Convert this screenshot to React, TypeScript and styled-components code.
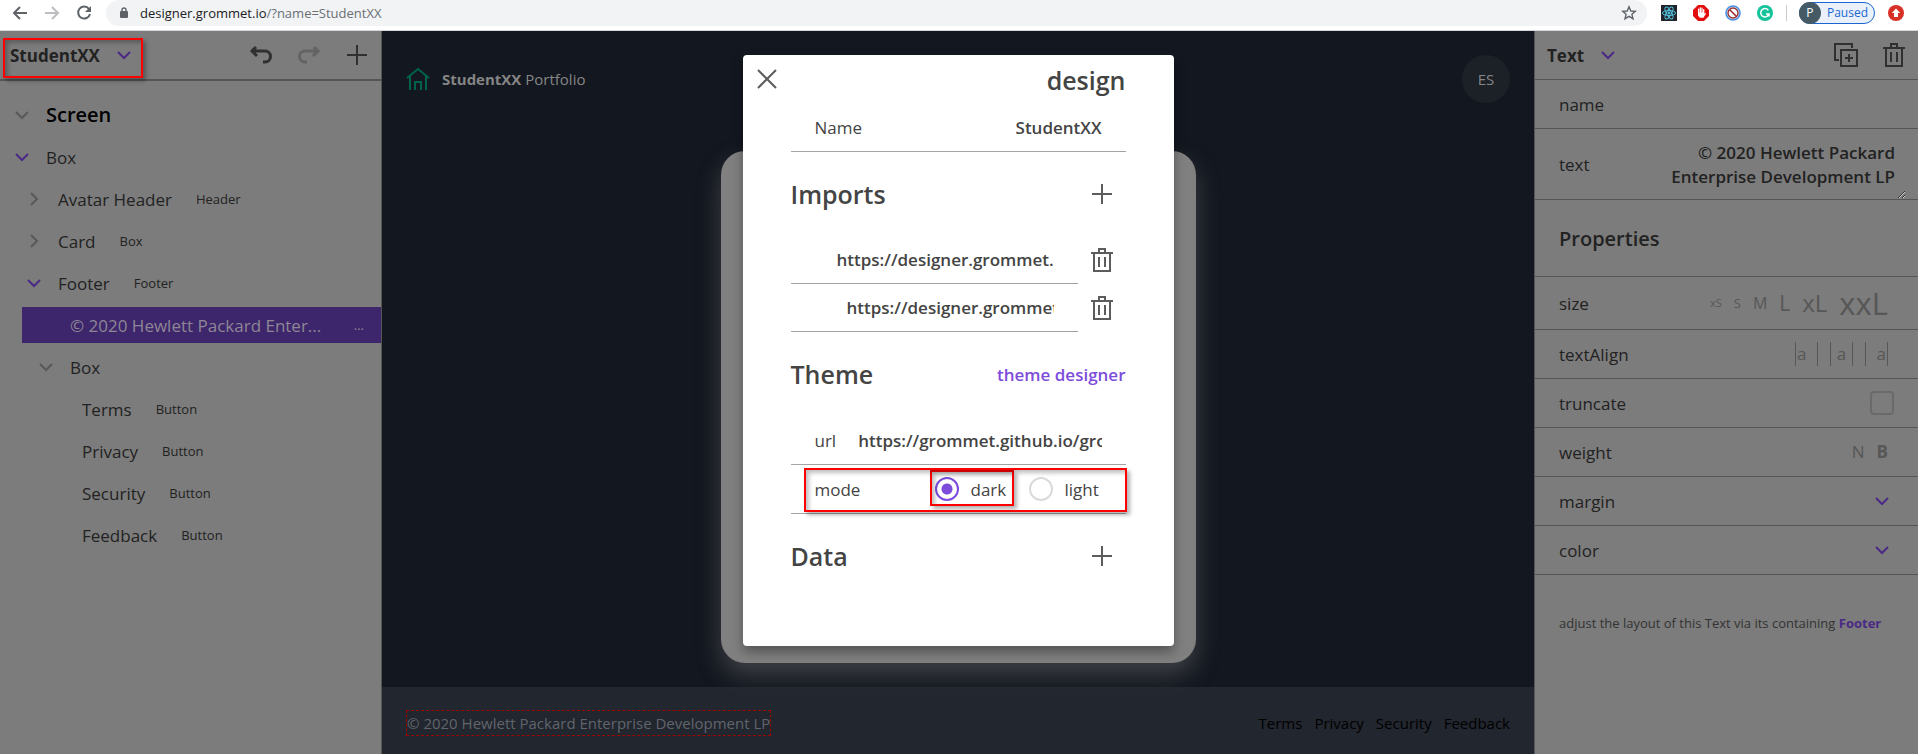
import React from "react";
import styled, { createGlobalStyle, css } from "styled-components";

const color = {
  panel: "#7c7c7c",
  line: "#555555",
  ink: "#222222",
  muted: "#444444",
  faint: "#575757",
  accent: "#4b2a86",
  brand: "#7d4cdb",
  canvas: "#13171f",
  footer: "#22262e",
};

const GlobalStyle = createGlobalStyle`
  *, *::before, *::after { box-sizing: border-box; }
  body { margin: 0; background: ${color.panel}; }
  body, button, input, textarea { font-family: "Open Sans", "Noto Sans", sans-serif; }
  button { border: 0; padding: 0; background: none; color: inherit; font-size: inherit; cursor: pointer; }
  h1, h2 { margin: 0; }
`;

/* ---------- icons ---------- */

type IconProps = { d: string; size?: number; width?: number; tint?: string; box?: number };
const Icon = ({ d, size = 24, width = 2, tint = "currentColor", box = 24 }: IconProps) => (
  <svg width={size} height={size} viewBox={`0 0 ${box} ${box}`} fill="none" stroke={tint} strokeWidth={width} aria-hidden="true">
    <path d={d} />
  </svg>
);

const shapes = {
  down: "M18 9 12 15 6 9",
  right: "M9 6 15 12 9 18",
  add: "M12 22V2M2 12H22",
  close: "M3 3 21 21M3 21 21 3",
  trash: "M4 5H20V23H4ZM1 5H23M9 1H15V5H9ZM9 9V19M15 9V19",
  duplicate: "M7 7H23V23H7ZM5 17H1V1H18V5M15 11V19M11 15H19",
  undo: "M7 4 3 8 8 13M3 8H16A5 5 0 0 1 16 19H14",
  redo: "M17 4 21 8 16 13M21 8H8A5 5 0 0 0 8 19H10",
  home: "M1 11 12 2 23 11M4 9V23M20 9V23M9 23V15H15V23",
  back: "M8 2 2 8 8 14M2 8H15",
  forward: "M8 2 14 8 8 14M14 8H1",
};

const Reload = () => (
  <svg width="16" height="16" viewBox="0 0 16 16" aria-hidden="true">
    <path d="M13 4A6 6 0 1 0 14 9" fill="none" stroke="#5f6368" strokeWidth="2" />
    <path d="M15 1V7H9Z" fill="#5f6368" />
  </svg>
);
const Lock = () => (
  <svg width="10" height="12" viewBox="0 0 10 12" aria-hidden="true">
    <rect x="1" y="4" width="8" height="7" rx="1" fill="#5f6368" />
    <path d="M3 5V3A2 2 0 0 1 7 3V5" fill="none" stroke="#5f6368" strokeWidth="1.4" />
  </svg>
);
const Star = () => (
  <svg width="16" height="16" viewBox="0 0 16 16" aria-hidden="true">
    <path d="M8 1.8 9.8 6 14.3 6.3 10.9 9.3 12 13.7 8 11.3 4 13.7 5.1 9.3 1.7 6.3 6.2 6Z" fill="none" stroke="#5f6368" strokeWidth="1.4" />
  </svg>
);
const ReactMark = () => (
  <svg width="16" height="16" viewBox="0 0 16 16" aria-hidden="true">
    <rect width="16" height="16" fill="#20232a" />
    <g fill="none" stroke="#53c1de" strokeWidth="1">
      <ellipse cx="8" cy="8" rx="6.6" ry="2.5" />
      <ellipse cx="8" cy="8" rx="6.6" ry="2.5" transform="rotate(60 8 8)" />
      <ellipse cx="8" cy="8" rx="6.6" ry="2.5" transform="rotate(120 8 8)" />
    </g>
    <circle cx="8" cy="8" r="1.4" fill="#53c1de" />
  </svg>
);
const HandMark = () => (
  <svg width="16" height="16" viewBox="0 0 16 16" aria-hidden="true">
    <path d="M5 0H11L16 5V11L11 16H5L0 11V5Z" fill="#e40d0d" />
    <path d="M5.6 8V4.2M7.3 7.5V3M9 7.5V3.2M10.7 8V4.6" stroke="#fff" strokeWidth="1.3" strokeLinecap="round" />
    <path d="M5 7.5H11.3V9L12.3 7.8 13 8.6 10.5 12.8H6.8L5 10.6Z" fill="#fff" />
  </svg>
);
const BlockMark = () => (
  <svg width="16" height="16" viewBox="0 0 16 16" aria-hidden="true">
    <circle cx="8" cy="8" r="7" fill="#dcebfa" stroke="#4a90e2" strokeWidth="1.6" />
    <circle cx="8" cy="8" r="5" fill="#fff" stroke="#a03030" strokeWidth="1.4" />
    <path d="M4.5 4.5 11.5 11.5" stroke="#a03030" strokeWidth="1.6" />
  </svg>
);
const GreenMark = () => (
  <svg width="16" height="16" viewBox="0 0 16 16" aria-hidden="true">
    <circle cx="8" cy="8" r="8" fill="#15c39a" />
    <path d="M11.3 5.2A4.2 4.2 0 1 0 12 9H9M12 9V11.6" fill="none" stroke="#fff" strokeWidth="1.5" />
  </svg>
);
const UpdateMark = () => (
  <svg width="16" height="16" viewBox="0 0 16 16" aria-hidden="true">
    <circle cx="8" cy="8" r="8" fill="#d93025" />
    <path d="M8 3.6 12.2 8H10V12H6V8H3.8Z" fill="#fff" />
  </svg>
);

/* ---------- browser bar ---------- */

const BrowserBar = styled.header`
  display: flex;
  align-items: flex-start;
  height: 31px;
  padding-left: 12px;
  padding-right: 14px;
  background: #fff;
  border-bottom: 1px solid #d5d7da;
`;
const NavButtons = styled.div`
  display: flex;
  align-items: center;
  gap: 16px;
  height: 25px;
  color: #5f6368;
`;
const BarButton = styled.button`
  display: flex;
  flex: none;
`;
const Address = styled.div`
  display: flex;
  flex: 1;
  align-items: center;
  height: 26px;
  margin: 0 14px;
  padding: 0 10px 0 13px;
  border-radius: 13px;
  background: #f1f3f4;
`;
const Url = styled.span`
  flex: 1;
  margin-left: 11px;
  color: #202124;
  font-size: 13px;
  line-height: 24px;
`;
const UrlPath = styled.span`
  color: #6b6f74;
`;
const Divider = styled.span`
  width: 1px;
  height: 16px;
  margin: 0 -4px 0 -3px;
  background: #c8cacd;
`;
const Profile = styled.button`
  display: flex;
  align-items: center;
  gap: 6px;
  height: 22px;
  margin-right: -3px;
  padding-right: 6px;
  border: 1px solid #1a67d2;
  border-radius: 11px;
  background: #eaf1fb;
  color: #1a67d2;
  font-size: 12px;
`;
const ProfileInitial = styled.span`
  width: 22px;
  height: 22px;
  margin-left: -1px;
  border-radius: 50%;
  background: #455a64;
  color: #fff;
  line-height: 22px;
`;

/* ---------- workspace ---------- */

const Page = styled.div`
  display: flex;
  flex-direction: column;
  min-height: 100vh;
`;
const Workspace = styled.div`
  display: grid;
  flex: 1;
  grid-template-columns: minmax(280px, 382px) minmax(480px, 1fr) minmax(300px, 384px);
`;
const Sidebar = styled.nav`
  border-right: 1px solid ${color.line};
  background: ${color.panel};
  color: ${color.ink};
`;
const PanelHeader = styled.div<{ $line: number }>`
  display: flex;
  align-items: center;
  justify-content: space-between;
  height: ${(p) => 48 + p.$line}px;
  border-bottom: ${(p) => p.$line}px solid ${color.line};
`;
const MenuButton = styled.button<{ $start: number }>`
  position: relative;
  display: flex;
  align-items: center;
  gap: 12px;
  height: 48px;
  padding: 0 7px 0 ${(p) => p.$start}px;
  font-size: 17px;
  font-weight: 700;
`;
const Actions = styled.div`
  display: flex;
  color: #303030;
`;
const IconButton = styled.button<{ $dim?: boolean }>`
  display: flex;
  flex: none;
  align-items: center;
  justify-content: center;
  width: 48px;
  height: 48px;
  ${(p) => p.$dim && css`color: #636363;`}
`;
const Highlight = styled.span<{ $inset: string }>`
  position: absolute;
  inset: ${(p) => p.$inset};
  border: 2px solid #ff0000;
  box-shadow: 3px 3px 4px rgba(0, 0, 0, 0.3), inset 3px 3px 4px rgba(0, 0, 0, 0.25);
  pointer-events: none;
`;

const Tree = styled.ul`
  margin: 0;
  padding: 12px 0 0;
  list-style: none;
`;
const TreeItem = styled.li<{ $indent: number }>`
  padding: 3px 0 3px ${(p) => p.$indent}px;
`;
const TreeButton = styled.button<{ $selected?: boolean; $title?: boolean }>`
  display: flex;
  align-items: center;
  width: 100%;
  height: ${(p) => (p.$title ? 37 : 36)}px;
  padding-left: ${(p) => (p.$selected ? 12 : 10)}px;
  padding-right: 17px;
  color: ${(p) => (p.$selected ? "#8e8696" : p.$title ? "#000" : color.ink)};
  background: ${(p) => (p.$selected ? "#3d266b" : "transparent")};
  font-size: ${(p) => (p.$title ? 20 : 17)}px;
  font-weight: ${(p) => (p.$title ? 600 : 400)};
`;
const Toggle = styled.span<{ $open?: boolean }>`
  display: flex;
  width: 24px;
  margin-right: 12px;
  color: ${(p) => (p.$open ? color.accent : "#595959")};
`;
const Kind = styled.span<{ $end?: boolean }>`
  margin-left: ${(p) => (p.$end ? "auto" : "24px")};
  font-size: 13px;
`;

type Node = { label: string; kind?: string; level: number; icon?: "down" | "right"; open?: boolean; selected?: boolean; title?: boolean };
const nodes: Node[] = [
  { label: "Screen", level: 0, icon: "down", title: true },
  { label: "Box", level: 0, icon: "down", open: true },
  { label: "Avatar Header", kind: "Header", level: 1, icon: "right" },
  { label: "Card", kind: "Box", level: 1, icon: "right" },
  { label: "Footer", kind: "Footer", level: 1, icon: "down", open: true },
  { label: "© 2020 Hewlett Packard Enter...", kind: "...", level: 2, selected: true },
  { label: "Box", level: 2, icon: "down" },
  { label: "Terms", kind: "Button", level: 3 },
  { label: "Privacy", kind: "Button", level: 3 },
  { label: "Security", kind: "Button", level: 3 },
  { label: "Feedback", kind: "Button", level: 3 },
];

/* ---------- canvas ---------- */

const Canvas = styled.main`
  position: relative;
  display: flex;
  flex-direction: column;
  background: ${color.canvas};
  color: #858585;
  font-size: 15px;
`;
const SiteHeader = styled.div`
  display: flex;
  align-items: center;
  justify-content: space-between;
  height: 96px;
  padding: 0 24px;
`;
const Brand = styled.div`
  display: flex;
  align-items: center;
  gap: 12px;
`;
const Avatar = styled.div`
  width: 48px;
  height: 48px;
  border-radius: 50%;
  background: #1c2027;
  line-height: 48px;
  text-align: center;
`;
const Stage = styled.div`
  display: flex;
  flex: 1;
  justify-content: center;
  padding: 24px;
`;
const StageCard = styled.div`
  width: 475px;
  border-radius: 24px;
  background: #808080;
  box-shadow: 0 12px 24px rgba(128, 128, 128, 0.4);
`;
const SiteFooter = styled.footer`
  display: flex;
  align-items: center;
  justify-content: space-between;
  padding: 23px 24px 18px;
  background: rgba(40, 44, 52, 0.75);
`;
const Copyright = styled.span`
  border: 1px dashed #a00000;
  color: #60656c;
  line-height: 24px;
`;
const FooterLinks = styled.div`
  display: flex;
  gap: 12px;
`;
const FooterLink = styled.a`
  color: #000;
  text-decoration: none;
`;

/* ---------- dialog ---------- */

const DialogLayer = styled.div`
  position: absolute;
  inset: 0;
  display: flex;
  align-items: flex-start;
  justify-content: center;
  padding-top: 24px;
`;
const Dialog = styled.section`
  width: 431px;
  padding-bottom: 48px;
  border-radius: 4px;
  background: #fff;
  color: ${color.muted};
  font-size: 17px;
  box-shadow: 0 6px 12px rgba(0, 0, 0, 0.35);
`;
const DialogHeader = styled.div`
  display: flex;
  align-items: center;
  justify-content: space-between;
  height: 48px;
  padding-right: 48px;
  color: #5c5c5c;
`;
const DialogTitle = styled.h1`
  padding-top: 2px;
  color: ${color.muted};
  font-size: 25px;
  font-weight: 600;
  line-height: 32px;
`;
const DialogBody = styled.div`
  padding: 0 48px;
`;
const Field = styled.div`
  position: relative;
  display: flex;
  flex: 1;
  align-items: center;
  justify-content: space-between;
  gap: 22px;
  min-width: 0;
  height: 49px;
  padding: 0 24px;
  border-bottom: 1px solid #a3a3a3;
`;
const ImportRow = styled.div`
  display: flex;
  height: 48px;
  color: #5c5c5c;
  ${Field} { height: 48px; }
`;
const TextInput = styled.input<{ $width?: number; $end?: boolean }>`
  flex: ${(p) => (p.$width ? "none" : "1")};
  width: ${(p) => (p.$width ? `${p.$width}px` : "auto")};
  min-width: 0;
  margin-left: auto;
  padding: 0;
  border: 0;
  outline: 0;
  background: none;
  color: ${color.muted};
  font-size: 17px;
  font-weight: 600;
  text-align: ${(p) => (p.$end ? "right" : "left")};
`;
const Section = styled.div`
  display: flex;
  align-items: center;
  justify-content: space-between;
  height: 84px;
  color: #5c5c5c;
`;
const SectionTitle = styled.h2`
  color: ${color.muted};
  font-size: 25px;
  font-weight: 600;
`;
const ThemeLink = styled.a`
  color: ${color.brand};
  font-weight: 600;
  text-decoration: none;
`;
const Choices = styled.div`
  display: flex;
  gap: 21px;
`;
const Choice = styled.label`
  position: relative;
  display: flex;
  align-items: center;
  gap: 12px;
  min-width: 73px;
  height: 24px;
`;
const Radio = styled.input`
  appearance: none;
  width: 24px;
  height: 24px;
  margin: 0;
  border: 2px solid #dadada;
  border-radius: 50%;
  &:checked {
    border-color: ${color.brand};
    background: radial-gradient(circle, ${color.brand} 5px, transparent 6px);
  }
`;

/* ---------- inspector ---------- */

const Inspector = styled.aside`
  border-left: 1px solid ${color.line};
  background: ${color.panel};
  color: ${color.ink};
  font-size: 17px;
`;
const Property = styled.div<{ $height?: number }>`
  display: flex;
  align-items: center;
  justify-content: space-between;
  height: ${(p) => p.$height ?? 49}px;
  padding: 0 24px;
  padding-right: 30px;
  border-bottom: 1px solid ${color.line};
`;
const PropertyTitle = styled.h2`
  font-size: 20px;
  font-weight: 600;
`;
const NameInput = styled(TextInput)`
  margin-left: 24px;
  color: ${color.ink};
`;
const TextProperty = styled(Property)`
  padding-right: 12px;
`;
const TextArea = styled.textarea`
  width: 250px;
  height: 70px;
  padding: 12px 11px 10px;
  border: 0;
  outline: 0;
  overflow: hidden;
  resize: vertical;
  background: none;
  color: ${color.ink};
  font-size: 17px;
  font-weight: 600;
  line-height: 24px;
  text-align: right;
`;
const Options = styled.div`
  display: flex;
  align-items: center;
  gap: 12px;
  color: ${color.faint};
`;
const SizeOption = styled.button<{ $size: number; $bold?: boolean }>`
  font-size: ${(p) => p.$size}px;
  font-weight: ${(p) => (p.$bold ? 700 : 400)};
  line-height: 40px;
`;
const AlignOption = styled.button<{ $align: string }>`
  width: 23px;
  height: 24px;
  padding: 0 1px;
  border: solid ${color.faint};
  border-width: 0 1px;
  text-align: ${(p) => p.$align};
  line-height: 24px;
`;
const CheckBox = styled.input`
  appearance: none;
  width: 24px;
  height: 24px;
  margin: 0 -6px 0 0;
  border: 2px solid #6a6a6a;
  border-radius: 4px;
`;
const Expand = styled.button`
  display: flex;
  margin-right: -6px;
  color: ${color.accent};
`;
const Hint = styled.p`
  margin: 0;
  padding: 38px 24px;
  color: #333;
  font-size: 13px;
  line-height: 20px;
`;
const HintLink = styled.a`
  color: ${color.accent};
  font-weight: 700;
  text-decoration: none;
`;

const sizes: [string, number][] = [["xS", 11], ["S", 13], ["M", 16], ["L", 21], ["xL", 24], ["xxL", 31]];

export default function App() {
  return (
    <Page>
      <GlobalStyle />
      <BrowserBar>
        <NavButtons>
          <BarButton aria-label="Back"><Icon d={shapes.back} size={16} box={16} /></BarButton>
          <BarButton aria-label="Forward"><Icon d={shapes.forward} size={16} box={16} tint="#bcbec1" /></BarButton>
          <BarButton aria-label="Reload"><Reload /></BarButton>
        </NavButtons>
        <Address>
          <Lock />
          <Url>designer.grommet.io<UrlPath>/?name=StudentXX</UrlPath></Url>
          <BarButton aria-label="Bookmark"><Star /></BarButton>
        </Address>
        <NavButtons>
          <BarButton aria-label="React tools"><ReactMark /></BarButton>
          <BarButton aria-label="Ad blocker"><HandMark /></BarButton>
          <BarButton aria-label="Script blocker"><BlockMark /></BarButton>
          <BarButton aria-label="Grammar"><GreenMark /></BarButton>
          <Divider />
          <Profile><ProfileInitial>P</ProfileInitial>Paused</Profile>
          <BarButton aria-label="Update"><UpdateMark /></BarButton>
        </NavButtons>
      </BrowserBar>

      <Workspace>
        <Sidebar>
          <PanelHeader $line={2}>
            <MenuButton $start={10}>
              StudentXX
              <Icon d={shapes.down} tint={color.accent} />
              <Highlight $inset="7px 0 1px 3px" />
            </MenuButton>
            <Actions>
              <IconButton aria-label="Undo"><Icon d={shapes.undo} width={3} /></IconButton>
              <IconButton aria-label="Redo" $dim><Icon d={shapes.redo} width={3} /></IconButton>
              <IconButton aria-label="Add"><Icon d={shapes.add} /></IconButton>
            </Actions>
          </PanelHeader>
          <Tree>
            {nodes.map((n, i) => (
              <TreeItem key={i} $indent={n.level * 12 - (n.selected ? 2 : 0)}>
                <TreeButton $selected={n.selected} $title={n.title}>
                  <Toggle $open={n.open}>{n.icon && <Icon d={shapes[n.icon]} />}</Toggle>
                  {n.label}
                  {n.kind && <Kind $end={n.selected}>{n.kind}</Kind>}
                </TreeButton>
              </TreeItem>
            ))}
          </Tree>
        </Sidebar>

        <Canvas>
          <SiteHeader>
            <Brand>
              <Icon d={shapes.home} tint="#00624c" />
              <span><b>StudentXX</b> Portfolio</span>
            </Brand>
            <Avatar>ES</Avatar>
          </SiteHeader>
          <Stage><StageCard /></Stage>
          <SiteFooter>
            <Copyright>© 2020 Hewlett Packard Enterprise Development LP</Copyright>
            <FooterLinks>
              {["Terms", "Privacy", "Security", "Feedback"].map((t) => (
                <FooterLink key={t} href="#">{t}</FooterLink>
              ))}
            </FooterLinks>
          </SiteFooter>

          <DialogLayer>
            <Dialog role="dialog" aria-label="design">
              <DialogHeader>
                <IconButton aria-label="Close"><Icon d={shapes.close} /></IconButton>
                <DialogTitle>design</DialogTitle>
              </DialogHeader>
              <DialogBody>
                <Field>
                  <label htmlFor="name">Name</label>
                  <TextInput id="name" $end defaultValue="StudentXX" />
                </Field>
                <Section>
                  <SectionTitle>Imports</SectionTitle>
                  <IconButton aria-label="Add import"><Icon d={shapes.add} /></IconButton>
                </Section>
                {[217, 207].map((w) => (
                  <ImportRow key={w}>
                    <Field>
                      <TextInput aria-label="Import url" $width={w} defaultValue="https://designer.grommet.io/" />
                    </Field>
                    <IconButton aria-label="Delete import"><Icon d={shapes.trash} /></IconButton>
                  </ImportRow>
                ))}
                <Section>
                  <SectionTitle>Theme</SectionTitle>
                  <ThemeLink href="#">theme designer</ThemeLink>
                </Section>
                <Field>
                  <label htmlFor="url">url</label>
                  <TextInput id="url" defaultValue="https://grommet.github.io/grommet" />
                </Field>
                <Field>
                  <span>mode</span>
                  <Choices>
                    <Choice>
                      <Radio type="radio" name="mode" defaultChecked />
                      dark
                      <Highlight $inset="-7px -6px -5px -5px" />
                    </Choice>
                    <Choice>
                      <Radio type="radio" name="mode" />
                      light
                    </Choice>
                  </Choices>
                  <Highlight $inset="3px -1px 1px 13px" />
                </Field>
                <Section>
                  <SectionTitle>Data</SectionTitle>
                  <IconButton aria-label="Add data"><Icon d={shapes.add} /></IconButton>
                </Section>
              </DialogBody>
            </Dialog>
          </DialogLayer>
        </Canvas>

        <Inspector>
          <PanelHeader $line={1}>
            <MenuButton $start={12}>
              Text
              <Icon d={shapes.down} tint={color.accent} />
            </MenuButton>
            <Actions>
              <IconButton aria-label="Duplicate"><Icon d={shapes.duplicate} /></IconButton>
              <IconButton aria-label="Delete"><Icon d={shapes.trash} /></IconButton>
            </Actions>
          </PanelHeader>
          <Property>
            <label htmlFor="prop-name">name</label>
            <NameInput id="prop-name" />
          </Property>
          <TextProperty $height={71}>
            <label htmlFor="prop-text">text</label>
            <TextArea id="prop-text" defaultValue="© 2020 Hewlett Packard Enterprise Development LP" />
          </TextProperty>
          <Property $height={77}><PropertyTitle>Properties</PropertyTitle></Property>
          <Property $height={53}>
            size
            <Options>
              {sizes.map(([t, s]) => <SizeOption key={t} $size={s}>{t}</SizeOption>)}
            </Options>
          </Property>
          <Property>
            textAlign
            <Options>
              {["left", "center", "right"].map((a) => <AlignOption key={a} $align={a} aria-label={a}>a</AlignOption>)}
            </Options>
          </Property>
          <Property>
            <label htmlFor="truncate">truncate</label>
            <CheckBox id="truncate" type="checkbox" />
          </Property>
          <Property>
            weight
            <Options>
              <SizeOption $size={17}>N</SizeOption>
              <SizeOption $size={17} $bold>B</SizeOption>
            </Options>
          </Property>
          {["margin", "color"].map((t) => (
            <Property key={t}>
              {t}
              <Expand aria-label={t}><Icon d={shapes.down} /></Expand>
            </Property>
          ))}
          <Hint>adjust the layout of this Text via its containing <HintLink href="#">Footer</HintLink></Hint>
        </Inspector>
      </Workspace>
    </Page>
  );
}
